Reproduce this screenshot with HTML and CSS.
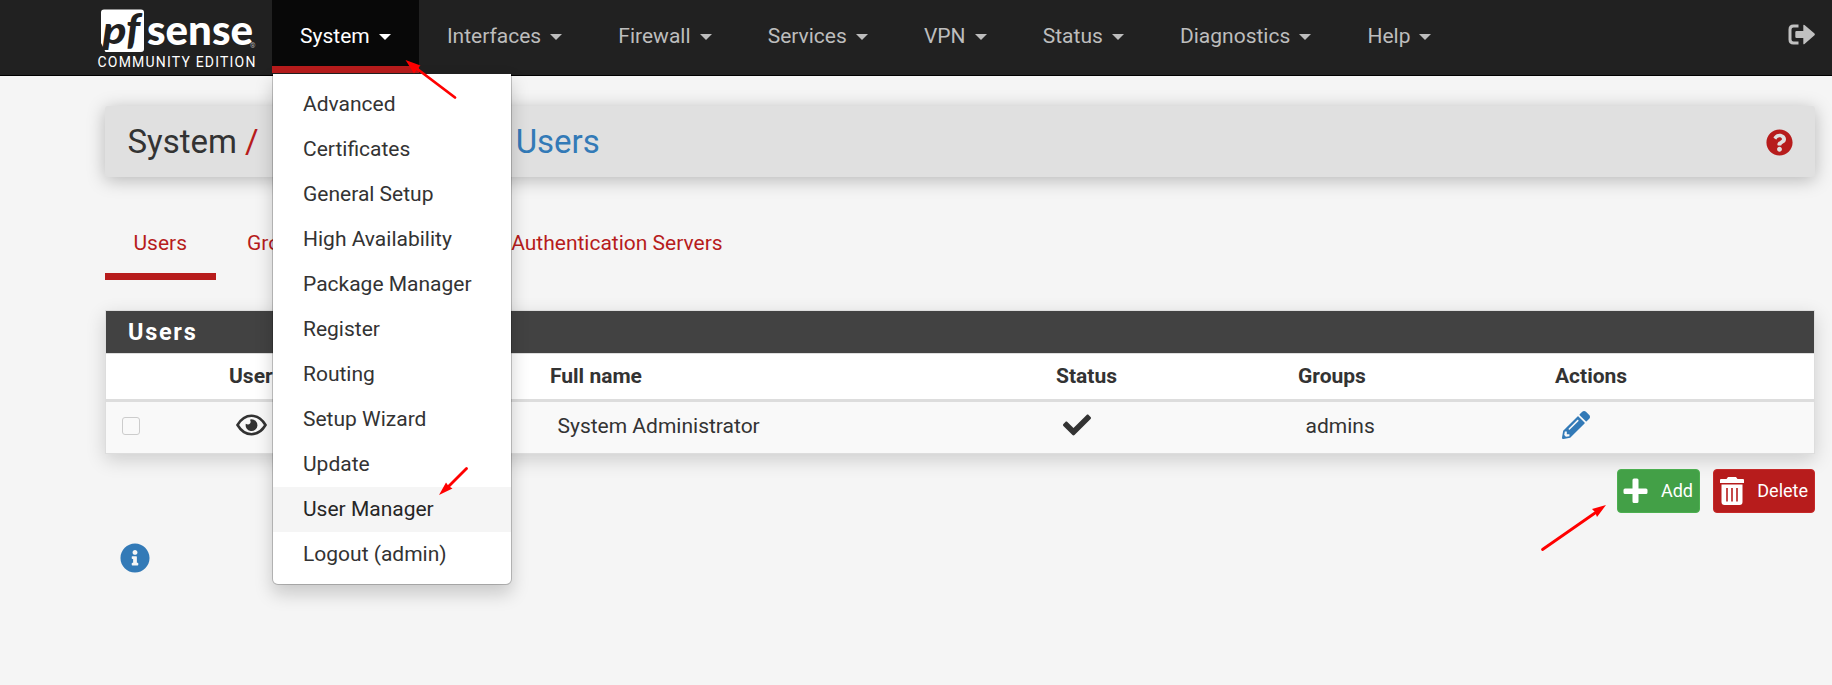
FILE: index.html
```html
<!DOCTYPE html>
<html lang="en">
<head>
<meta charset="utf-8">
<title>System / User Manager / Users</title>
<link rel="stylesheet" href="styles.css">
</head>
<body>
<header class="navbar">
  <div class="brand">
    <svg class="logo" width="160" height="54" viewBox="0 0 160 54">
      <path class="logo-plate" d="M7 9.500H44q3 0 3 3V49q0 3-3 3H8.500L4 43V12.500q0-3 3-3z"/>
      <text class="logo-p" x="5.500" y="43.500" textLength="24" lengthAdjust="spacingAndGlyphs">p</text>
      <text class="logo-f" x="29" y="43.500">f</text>
      <text class="logo-sense" x="50" y="44.500" textLength="106" lengthAdjust="spacingAndGlyphs">sense</text>
      <text class="logo-reg" x="153" y="48">®</text>
    </svg>
    <span class="edition">COMMUNITY EDITION</span>
  </div>
  <nav class="menu">
    <div class="menu-item open">
      <a class="menu-link">System<i class="caret"></i></a>
      <ul class="dropdown">
        <li>Advanced</li>
        <li>Certificates</li>
        <li>General Setup</li>
        <li>High Availability</li>
        <li>Package Manager</li>
        <li>Register</li>
        <li>Routing</li>
        <li>Setup Wizard</li>
        <li>Update</li>
        <li class="hover">User Manager</li>
        <li>Logout (admin)</li>
      </ul>
    </div>
    <div class="menu-item"><a class="menu-link">Interfaces<i class="caret"></i></a></div>
    <div class="menu-item"><a class="menu-link">Firewall<i class="caret"></i></a></div>
    <div class="menu-item"><a class="menu-link">Services<i class="caret"></i></a></div>
    <div class="menu-item"><a class="menu-link">VPN<i class="caret"></i></a></div>
    <div class="menu-item"><a class="menu-link">Status<i class="caret"></i></a></div>
    <div class="menu-item"><a class="menu-link">Diagnostics<i class="caret"></i></a></div>
    <div class="menu-item"><a class="menu-link">Help<i class="caret"></i></a></div>
  </nav>
  <svg class="signout" width="27" height="21" viewBox="0 0 27 21">
    <path d="M10.500 2H5.500Q2 2 2 5.500v10Q2 19 5.500 19h5" fill="none" stroke="currentColor" stroke-width="3"/>
    <path d="M8.500 7h6.800V1.500q0-1.300 1.200-.6L26.500 9.600q.7.800 0 1.600L16.500 20q-1.200.7-1.200-.6V14H8.500q-1.200 0-1.200-1.200V8.200Q7.300 7 8.500 7z" fill="currentColor"/>
  </svg>
</header>

<main class="page">
  <div class="page-head">
    <h1 class="crumbs"><span>System</span><span class="sep">/</span><span class="crumb-mid">User Manager</span><span class="sep">/</span><a class="crumb-link">Users</a></h1>
    <svg class="help" width="27" height="27" viewBox="0 0 512 512"><path fill="currentColor" d="M504 256c0 136.997-111.043 248-248 248S8 392.997 8 256C8 119.083 119.043 8 256 8s248 111.083 248 248zM262.655 90c-54.497 0-89.255 22.957-116.549 63.758-3.536 5.286-2.353 12.415 2.715 16.258l34.699 26.310c5.205 3.947 12.621 3.008 16.665-2.122 17.864-22.658 30.113-35.797 57.303-35.797 20.429 0 45.698 13.148 45.698 32.958 0 14.976-12.363 22.667-32.534 33.976C247.128 238.528 216 254.941 216 296v4c0 6.627 5.373 12 12 12h56c6.627 0 12-5.373 12-12v-1.333c0-28.462 83.186-29.647 83.186-106.667 0-58.002-60.165-102-116.531-102zM256 338c-25.365 0-46 20.635-46 46 0 25.364 20.635 46 46 46s46-20.636 46-46c0-25.365-20.635-46-46-46z"/></svg>
  </div>

  <div class="tabs">
    <a class="tab active">Users</a>
    <a class="tab">Groups</a>
    <a class="tab">Settings</a>
    <a class="tab">Authentication Servers</a>
  </div>

  <section class="panel">
    <h2 class="panel-title">Users</h2>
    <table class="users">
      <colgroup><col class="c-check"><col class="c-user"><col class="c-name"><col class="c-status"><col class="c-groups"><col></colgroup>
      <thead><tr><th></th><th>Username</th><th>Full name</th><th>Status</th><th>Groups</th><th>Actions</th></tr></thead>
      <tbody><tr>
        <td class="pick"><span class="box"></span></td>
        <td><span class="cell-flex">
          <svg class="eye" width="31" height="22" viewBox="0 0 31 22"><path d="M1.500 11Q7 1.800 15.500 1.800T29.500 11Q24 20.200 15.500 20.200T1.500 11z" fill="none" stroke="#333" stroke-width="2.600"/><path d="M15.500 5.300a5.900 5.900 0 1 1-5.700 4.500q2.700 1.500 4.200-.3 1.300-1.800-.1-3.800.8-.4 1.600-.4z" fill="#333"/></svg>
          admin</span></td>
        <td>System Administrator</td>
        <td><svg class="ico" width="28" height="28" viewBox="0 0 512 512"><path fill="#333" d="M173.898 439.404l-166.400-166.400c-9.997-9.997-9.997-26.206 0-36.204l36.203-36.204c9.997-9.998 26.207-9.998 36.204 0L192 312.690 432.095 72.596c9.997-9.997 26.207-9.997 36.204 0l36.203 36.204c9.997 9.997 9.997 26.206 0 36.204l-294.400 294.401c-9.998 9.997-26.207 9.997-36.204-.001z"/></svg></td>
        <td>admins</td>
        <td><svg class="ico" width="28" height="28" viewBox="0 0 512 512"><path fill="#337ab7" d="M497.900 142.100l-46.100 46.100c-4.700 4.700-12.300 4.700-17 0l-111-111c-4.700-4.700-4.700-12.300 0-17l46.100-46.100c18.700-18.700 49.100-18.700 67.900 0l60.100 60.100c18.800 18.700 18.800 49.100 0 67.900zM284.200 99.800L21.600 362.400.4 483.900c-2.900 16.400 11.400 30.600 27.800 27.800l121.500-21.300 262.600-262.600c4.700-4.700 4.700-12.300 0-17l-111-111c-4.800-4.700-12.400-4.700-17.100 0zM124.100 339.900c-5.500-5.500-5.500-14.300 0-19.800l154-154c5.500-5.500 14.300-5.500 19.800 0s5.500 14.300 0 19.800l-154 154c-5.500 5.500-14.300 5.500-19.800 0zM88 424h48v36.300l-64.500 11.300-31.100-31.100L51.700 376H88v48z"/></svg></td>
      </tr></tbody>
    </table>
  </section>

  <div class="actions">
    <button class="btn add"><svg width="26" height="26" viewBox="0 0 26 26"><path fill="#fff" d="M11 .5h3q1.500 0 1.500 1.500v8.500H23q1.500 0 1.500 1.500v2.500Q24.500 16 23 16h-7.500v7.500q0 1.500-1.500 1.500h-3q-1.500 0-1.500-1.500V16H2Q.5 16 .5 14.500V12q0-1.500 1.500-1.500h7.500V2Q9.500.5 11 .5z"/></svg><span>Add</span></button>
    <button class="btn delete"><svg width="24" height="28" viewBox="0 0 24 28"><path fill="#fff" fill-rule="evenodd" d="M8 0h8l1.500 2H23q1 0 1 1v3H0V3q0-1 1-1h5.500zM1.500 7.500h21V25q0 3-3 3h-15q-3 0-3-3zM6.200 11v13.500h1.600V11zM11.200 11v13.500h1.600V11zM16.200 11v13.500h1.600V11z"/></svg><span>Delete</span></button>
  </div>

  <svg class="info" width="30" height="30" viewBox="0 0 512 512"><path fill="currentColor" d="M256 8C119.043 8 8 119.083 8 256c0 136.997 111.043 248 248 248s248-111.003 248-248C504 119.083 392.957 8 256 8zm0 110c23.196 0 42 18.804 42 42s-18.804 42-42 42-42-18.804-42-42 18.804-42 42-42zm56 254c0 6.627-5.373 12-12 12h-88c-6.627 0-12-5.373-12-12v-24c0-6.627 5.373-12 12-12h12v-64h-12c-6.627 0-12-5.373-12-12v-24c0-6.627 5.373-12 12-12h64c6.627 0 12 5.373 12 12v100h12c6.627 0 12 5.373 12 12v24z"/></svg>
</main>

<!-- Annotation arrows drawn over the page -->
<svg class="arrows" width="1832" height="685" viewBox="0 0 1832 685">
  <g stroke="#f00" stroke-width="2.800" stroke-linecap="round">
    <path d="M455 97.500L416 68"/><path d="M466.500 468.500L449 486"/><path d="M1542.500 549.500L1595 513"/>
  </g>
  <g fill="#f00">
    <path d="M405.500 60L420.500 65.500 417.500 68.500 414 73.500z"/>
    <path d="M439 495L446 482.500 448.500 486 452.500 488.500z"/>
    <path d="M1606 505L1592 509 1595 512 1597 517z"/>
  </g>
</svg>
</body>
</html>
```
FILE: styles.css
```css
* { box-sizing: border-box; }

body {
  margin: 0;
  height: 685px;
  overflow: hidden;
  background: #f5f5f5;
  color: #333;
  font: 21px/30px Roboto, sans-serif;
}

svg { display: block; flex: none; }

.navbar {
  display: flex;
  height: 76px;
  padding: 0 17px 0 97px;
  background: #212121;
  border-bottom: 1px solid #000;
}

.brand { width: 175px; flex: none; }

.logo-plate { fill: #fff; }
.logo-p { font: italic 900 38px Lato, sans-serif; fill: #212121; }
.logo-f { font: italic 900 42px Lato, sans-serif; fill: #212121; }
.logo-sense { font: 900 42px Lato, sans-serif; fill: #fff; }
.logo-reg { font: 7px Roboto, sans-serif; fill: #aaa; }

.edition {
  display: block;
  margin-left: .5px;
  color: #fff;
  font-size: 14px;
  line-height: 16px;
  letter-spacing: 1.2px;
  white-space: nowrap;
}

.menu { display: flex; flex: 1; }
.menu-item { position: relative; height: 73px; }

.menu-link {
  display: flex;
  align-items: center;
  height: 73px;
  padding: 0 28.080px 1px;
  color: #bdbdbd;
}

.open .menu-link {
  padding-bottom: 0;
  background: #080808;
  border-bottom: 7px solid #b71c1c;
  color: #fff;
  padding-top: 6px;
}

.caret {
  margin: 2px 0 0 9px;
  border: 6px solid transparent;
  border-top-color: currentColor;
  border-bottom: 0;
}

.signout { margin-top: 24px; color: #c0c0c0; }

.dropdown {
  position: absolute;
  z-index: 5;
  top: 73px;
  left: 0;
  width: 240px;
  margin: 0;
  padding: 8px 0 7px;
  list-style: none;
  background: #fff;
  background-clip: padding-box;
  border: 1px solid rgba(0, 0, 0, .2);
  border-top-color: transparent;
  border-radius: 0 0 6px 6px;
  box-shadow: 0 9px 18px rgba(0, 0, 0, .18);
}

.dropdown li { height: 45px; padding: 0 30px; line-height: 45px; white-space: nowrap; }
.dropdown .hover { background: #f5f5f5; color: #262626; }

.page { padding: 30px 17px 0 105px; }

.page-head {
  display: flex;
  align-items: center;
  justify-content: space-between;
  height: 71px;
  padding: 0 22px 0 22.500px;
  background: #e0e0e0;
  border-radius: 3px;
  box-shadow: 0 3px 18px rgba(0, 0, 0, .26);
}

.crumbs { display: flex; margin: 0; font-size: 33px; line-height: 40px; font-weight: 400; }
.sep { margin: 0 15px 0 8px; color: #b71c1c; }
.crumb-link { color: #337ab7; }
.help { margin-top: 2px; color: #b71c1c; }

.tabs { display: flex; gap: 3px; height: 67px; margin-top: 36px; }
.tab { padding: 15px 28.500px 0; color: #b71c1c; }
.tab.active { border-bottom: 7px solid #b71c1c; }

.panel {
  margin-top: 30px;
  background: #fff;
  border: 1px solid #ddd;
  box-shadow: 0 6px 18px rgba(0, 0, 0, .16);
}

.panel-title {
  height: 43px;
  margin: 0;
  padding-left: 22px;
  background: #424242;
  border-bottom: 1px solid #ddd;
  color: #fff;
  font-size: 23.500px;
  font-weight: 700;
  line-height: 43px;
  letter-spacing: 1.700px;
}

.users { width: 100%; table-layout: fixed; border-collapse: separate; border-spacing: 0; }
.c-check { width: 122px; }
.c-user { width: 321px; }
.c-name { width: 506px; }
.c-status { width: 242px; }
.c-groups { width: 257px; }
.users th { height: 48px; padding: 0 0 2px 1px; border-bottom: 3px solid #ddd; text-align: left; font-weight: 700; }
.users td { height: 51px; padding: 0 0 3px 8.500px; background: #f9f9f9; vertical-align: middle; }
.users .pick { padding: 0 0 3px 16px; }
.cell-flex { display: flex; align-items: center; gap: 8px; }
.eye { margin: 0 0 2px -1px; }
.ico { margin: 0 0 2px -.5px; }
.box { display: block; width: 18px; height: 18px; border: 1px solid #ccc; border-radius: 3px; }

.actions { display: flex; justify-content: flex-end; gap: 13px; margin-top: 15px; }

.btn {
  display: flex;
  align-items: center;
  justify-content: space-between;
  height: 44px;
  padding: 0 6px;
  border: 1px solid;
  border-radius: 4px;
  color: #fff;
  font: 18px Roboto, sans-serif;
}

.btn span { padding-bottom: 2px; }
.add { width: 83px; padding-left: 5px; background: #43a047; border-color: #4caf50; }
.delete { width: 102px; background: #b71c1c; border-color: #c62828; }

.info { margin: 29.500px 0 0 15px; color: #337ab7; }

.arrows { position: absolute; z-index: 10; top: 0; left: 0; pointer-events: none; }
```
